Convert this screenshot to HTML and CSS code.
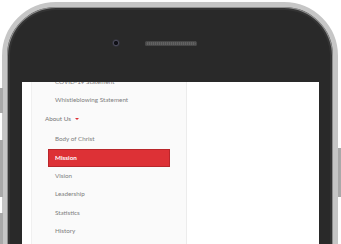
FILE: index.html
```html
<!DOCTYPE html>
<html lang="en">
<head>
<meta charset="UTF-8">
<meta name="viewport" content="width=device-width, initial-scale=1.0">
<title>Mobile menu preview</title>
<link rel="stylesheet" href="styles.css">
</head>
<body>

<div class="phone">
  <span class="side-btn btn-mute"></span>
  <span class="side-btn btn-vol-up"></span>
  <span class="side-btn btn-vol-down"></span>
  <span class="side-btn btn-power"></span>

  <div class="phone-top">
    <span class="camera"></span>
    <span class="speaker"></span>
  </div>

  <div class="screen">
    <aside class="sidebar">
      <ul class="menu">
        <li class="sub-item"><a href="#">COVID-19 Statement</a></li>
        <li class="sub-item"><a href="#">Whistleblowing Statement</a></li>
        <li class="top-item">
          <a href="#">About Us <span class="caret"></span></a>
          <ul class="submenu">
            <li class="sub-item"><a href="#">Body of Christ</a></li>
            <li class="sub-item active"><a href="#">Mission</a></li>
            <li class="sub-item"><a href="#">Vision</a></li>
            <li class="sub-item"><a href="#">Leadership</a></li>
            <li class="sub-item"><a href="#">Statistics</a></li>
            <li class="sub-item"><a href="#">History</a></li>
          </ul>
        </li>
      </ul>
    </aside>
    <div class="content"></div>
  </div>
</div>

</body>
</html>
```

FILE: styles.css
```css
html, body {
  margin: 0;
  height: 244px;
  overflow: hidden;
  background: #ffffff;
}

body {
  font-family: "Lato", "Open Sans", Arial, sans-serif;
}

.phone {
  position: relative;
  box-sizing: border-box;
  width: 336px;
  height: 300px;
  margin: 2px 0 0 2px;
  border: 5px solid #c6c6c6;
  border-radius: 54px;
  background: #292929;
  box-shadow: inset 0 0 0 1px #8f8f8f, inset 0 0 0 3px #343434;
  padding: 0 14px 0 15px;
}

/* side buttons sit outside the frame */
.side-btn {
  position: absolute;
  width: 3px;
  background: #a9a9a9;
}

.btn-mute { left: -7px; top: 81px; height: 25px; }
.btn-vol-up { left: -7px; top: 133px; height: 57px; }
.btn-vol-down { left: -7px; top: 206px; height: 60px; }
.btn-power { right: -8px; top: 141px; height: 49px; }

.phone-top {
  display: flex;
  align-items: flex-start;
  height: 75px;
  box-sizing: border-box;
  padding: 32px 0 0 90px;
}

.camera {
  width: 8px;
  height: 8px;
  border-radius: 50%;
  background: radial-gradient(circle at 50% 50%, #101016 0, #101016 1.6px, #4a4a5a 2.6px, #33333b 3.4px, #2b2b2e 4px);
}

.speaker {
  width: 52px;
  height: 5px;
  margin: 2px 0 0 25px;
  border-radius: 3px;
  background: repeating-linear-gradient(90deg, #626262 0, #626262 1px, #525252 1px, #525252 2px);
  box-shadow: inset 0 0 0 1px #464646;
}

.screen {
  display: flex;
  height: 200px;
  overflow: hidden;
  background: #ffffff;
}

.sidebar {
  box-sizing: border-box;
  width: 156px;
  margin-left: 9px;
  background: #fafafa;
  border-left: 1px solid #f0f0f0;
  border-right: 1px solid #ececec;
}

.content {
  flex: 1;
}

.menu, .submenu {
  list-style: none;
  margin: 0;
  padding: 0;
}

.menu {
  margin-top: -9px;
}

.submenu {
  margin-top: 2px;
}

.menu a {
  display: block;
  color: #808080;
  text-decoration: none;
  font-size: 6.3px;
  line-height: 16.4px;
  border: 1px solid transparent;
  white-space: nowrap;
}

.top-item > a {
  padding-left: 12px;
  color: #747474;
}

.sub-item a {
  margin: 0 16px;
  padding-left: 6px;
}

.sub-item.active a {
  background: #dd3136;
  border-color: #b9262b;
  color: #ffffff;
  font-weight: bold;
}

.caret {
  display: inline-block;
  width: 0;
  height: 0;
  margin-left: 2px;
  vertical-align: 1px;
  border-left: 2px solid transparent;
  border-right: 2px solid transparent;
  border-top: 2px solid #dd3136;
}
```
